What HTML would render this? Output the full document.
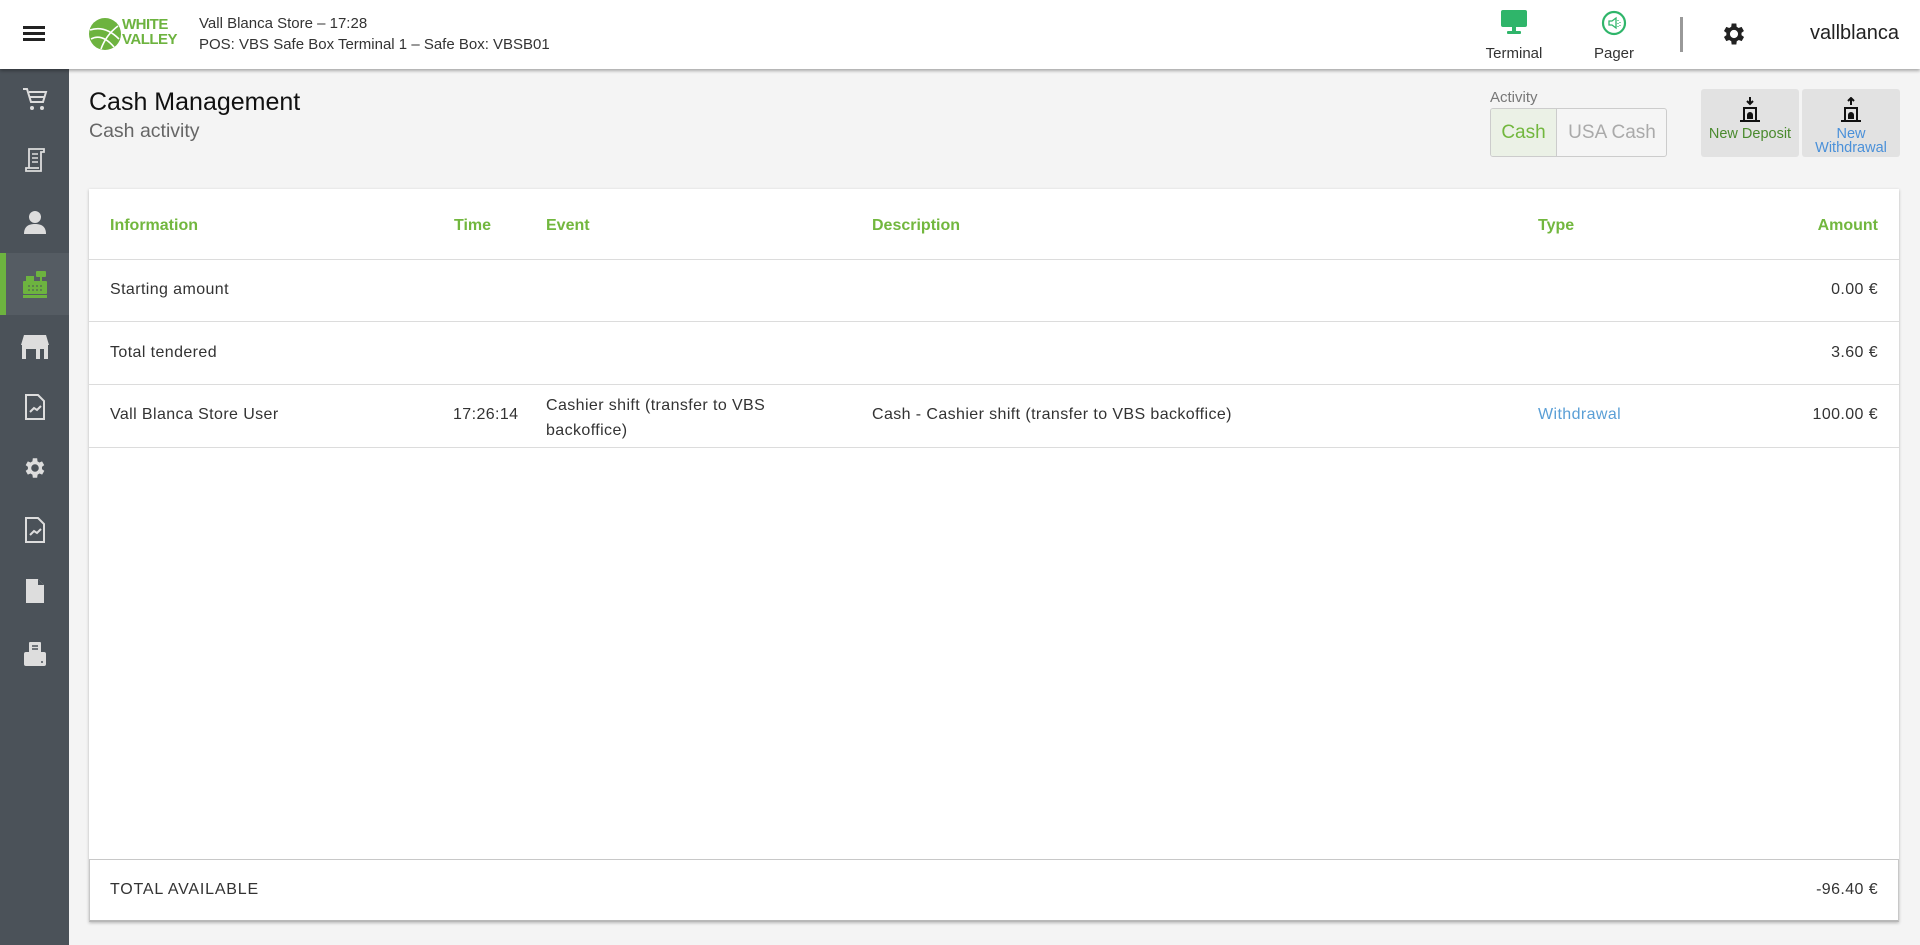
<!DOCTYPE html>
<html><head><meta charset="utf-8"><style>
*{box-sizing:border-box;margin:0;padding:0}
body{width:1920px;height:945px;overflow:hidden;background:#f4f4f4;font-family:"Liberation Sans",Arial,sans-serif;color:#333;position:relative}
.top{position:absolute;left:0;top:0;width:1920px;height:69px;background:#fff;box-shadow:0 2px 3px rgba(0,0,0,.3);z-index:5}
.side{position:absolute;left:0;top:69px;width:69px;height:876px;background:#4b5259}
.ico{position:absolute;left:0;width:69px;display:flex;justify-content:center;align-items:center;height:40px}
.abs{position:absolute}
.card{position:absolute;left:89px;top:189px;width:1810px;height:733px;background:#fff;box-shadow:0 1px 3px rgba(0,0,0,.25)}
.th{position:absolute;top:28px;font-weight:bold;color:#72b73e;font-size:16px}
.line{position:absolute;left:0;width:1810px;height:1px;background:#dcdcdc}
.td{position:absolute;font-size:16px;color:#333;letter-spacing:.4px}
.r{text-align:right}
</style></head><body>
<div class="top">
  <div class="abs" style="left:23px;top:26px;width:22px;height:3px;background:#222;box-shadow:0 6px 0 #222,0 12px 0 #222"></div>
  <svg class="abs" style="left:88px;top:17px" width="34" height="34" viewBox="0 0 34 34"><circle cx="17" cy="17" r="16" fill="#6db33f"/><path d="M2 13 Q17 8 31 22 M3 22 Q14 16 26 30 M13 32 Q18 18 30 9" stroke="#fff" stroke-width="1.6" fill="none"/></svg>
  <div class="abs" style="left:122px;top:17px;color:#6db33f;font-weight:bold;font-size:15px;line-height:15px;letter-spacing:-.5px">WHITE<br>VALLEY</div>
  <div class="abs" style="left:199px;top:13px;font-size:15px;line-height:21px;color:#333">Vall Blanca Store – 17:28<br>POS: VBS Safe Box Terminal 1 – Safe Box: VBSB01</div>
  <svg class="abs" style="left:1500px;top:9px" width="28" height="26" viewBox="0 0 28 26"><rect x="1" y="1" width="26" height="17" rx="2" fill="#2fb56a"/><rect x="12" y="18" width="4" height="4" fill="#2fb56a"/><rect x="7" y="22" width="14" height="3" rx="1" fill="#2fb56a"/></svg>
  <div class="abs" style="left:1484px;top:45px;width:60px;text-align:center;font-size:15px">Terminal</div>
  <svg class="abs" style="left:1601px;top:10px" width="26" height="26" viewBox="0 0 26 26"><circle cx="13" cy="13" r="11" fill="none" stroke="#2fb56a" stroke-width="2.2"/><path d="M8 11h3l4-3v10l-4-3H8z" fill="none" stroke="#2fb56a" stroke-width="1.3"/><path d="M17 10v1M17 13v1M17 16v1M19 12v1M19 15v1" stroke="#2fb56a" stroke-width="1.2"/></svg>
  <div class="abs" style="left:1584px;top:45px;width:60px;text-align:center;font-size:15px">Pager</div>
  <div class="abs" style="left:1680px;top:17px;width:3px;height:35px;background:#999"></div>
  <svg class="abs" style="left:1720px;top:20px" width="28" height="28" viewBox="0 0 24 24"><path fill="#222" d="M19.4 13a7.5 7.5 0 000-2l2.1-1.6-2-3.5-2.5 1a7.3 7.3 0 00-1.7-1L15 3h-4l-.4 2.9a7.3 7.3 0 00-1.7 1l-2.5-1-2 3.5L6.5 11a7.5 7.5 0 000 2l-2.1 1.6 2 3.5 2.5-1a7.3 7.3 0 001.7 1L11 21h4l.4-2.9a7.3 7.3 0 001.7-1l2.5 1 2-3.5zM13 15.5a3.5 3.5 0 110-7 3.5 3.5 0 010 7z" transform="translate(-1 0)"/></svg>
  <div class="abs" style="left:1810px;top:22px;font-size:20px;color:#222">vallblanca</div>
</div>
<div class="side">
  <div class="ico" style="top:10px"><svg width="26" height="26" viewBox="0 0 26 26"><path d="M1 3h4l4 13h12l3-10H7" fill="none" stroke="#ddd" stroke-width="2"/><path d="M8 11h14" stroke="#ddd" stroke-width="2"/><circle cx="10" cy="22" r="2" fill="#ddd"/><circle cx="20" cy="22" r="2" fill="#ddd"/></svg></div>
  <div class="ico" style="top:71px"><svg width="26" height="28" viewBox="0 0 26 28"><path d="M7 22V3h15v3h-3v19H4v-3h13" fill="none" stroke="#ddd" stroke-width="1.8"/><path d="M10 8h6M10 12h6M10 16h6" stroke="#ddd" stroke-width="1.6"/></svg></div>
  <div class="ico" style="top:133px"><svg width="24" height="26" viewBox="0 0 24 26"><circle cx="12" cy="8" r="6" fill="#ddd"/><path d="M1 25c0-8 5-10 11-10s11 2 11 10z" fill="#ddd"/></svg></div>
  <div class="abs" style="left:0;top:184px;width:69px;height:62px;background:#555c63"></div>
  <div class="abs" style="left:0;top:184px;width:6px;height:62px;background:#6db33f"></div>
  <div class="ico" style="top:195px"><svg width="30" height="30" viewBox="0 0 30 30"><rect x="3" y="12" width="24" height="13" rx="1" fill="#6db33f"/><rect x="6" y="7" width="8" height="7" fill="#6db33f"/><rect x="16" y="2" width="10" height="6" rx="1" fill="#6db33f"/><rect x="20" y="8" width="2" height="5" fill="#6db33f"/><rect x="3" y="26" width="24" height="3" fill="#6db33f"/><path d="M8 17h2M12 17h2M16 17h2M20 17h2M8 21h2M12 21h2M16 21h2M20 21h2" stroke="#4b5259" stroke-width="1"/></svg></div>
  <div class="ico" style="top:258px"><svg width="30" height="28" viewBox="0 0 30 28"><path d="M4 2h22l3 10H1z" fill="#ddd"/><rect x="2" y="12" width="26" height="14" fill="#ddd"/><rect x="6" y="16" width="10" height="10" fill="#4b5259"/><rect x="20" y="16" width="4" height="10" fill="#4b5259"/></svg></div>
  <div class="ico" style="top:318px"><svg width="22" height="28" viewBox="0 0 22 28"><path d="M2 2h12l6 6v18H2z" fill="none" stroke="#ddd" stroke-width="2"/><path d="M6 19l4-4 3 2 4-4" fill="none" stroke="#ddd" stroke-width="2"/></svg></div>
  <div class="ico" style="top:379px"><svg width="26" height="26" viewBox="0 0 24 24"><path fill="#ddd" d="M19.4 13a7.5 7.5 0 000-2l2.1-1.6-2-3.5-2.5 1a7.3 7.3 0 00-1.7-1L15 3h-4l-.4 2.9a7.3 7.3 0 00-1.7 1l-2.5-1-2 3.5L6.5 11a7.5 7.5 0 000 2l-2.1 1.6 2 3.5 2.5-1a7.3 7.3 0 001.7 1L11 21h4l.4-2.9a7.3 7.3 0 001.7-1l2.5 1 2-3.5zM13 15.5a3.5 3.5 0 110-7 3.5 3.5 0 010 7z" transform="translate(-1 0)"/></svg></div>
  <div class="ico" style="top:441px"><svg width="22" height="28" viewBox="0 0 22 28"><path d="M2 2h12l6 6v18H2z" fill="none" stroke="#ddd" stroke-width="2"/><path d="M6 19l4-4 3 2 4-4" fill="none" stroke="#ddd" stroke-width="2"/></svg></div>
  <div class="ico" style="top:502px"><svg width="22" height="28" viewBox="0 0 22 28"><path d="M2 2h12l6 6v18H2z" fill="#ddd"/><path d="M14 2v6h6" fill="#4b5259"/></svg></div>
  <div class="ico" style="top:565px"><svg width="26" height="28" viewBox="0 0 26 28"><rect x="7" y="2" width="12" height="12" rx="1" fill="#ddd"/><rect x="2" y="12" width="22" height="14" rx="2" fill="#ddd"/><path d="M10 6h6M10 9h6" stroke="#4b5259" stroke-width="1.5"/><circle cx="20" cy="22" r="1" fill="#4b5259"/></svg></div>
</div>
<div class="abs" style="left:89px;top:88px;font-size:25px;color:#111">Cash Management</div>
<div class="abs" style="left:89px;top:120px;font-size:19.5px;color:#666">Cash activity</div>
<div class="abs" style="left:1490px;top:89px;font-size:15px;color:#777">Activity</div>
<div class="abs" style="left:1490px;top:108px;width:177px;height:49px;border:1px solid #ccc;border-radius:3px;background:#f5f5f5;overflow:hidden">
  <div class="abs" style="left:0;top:0;width:66px;height:47px;background:#ebf1e6;border-right:1px solid #ccc;color:#72b73e;font-size:19px;text-align:center;line-height:47px">Cash</div>
  <div class="abs" style="left:67px;top:0;width:108px;height:47px;color:#aaa;font-size:19px;text-align:center;line-height:47px">USA Cash</div>
</div>
<div class="abs" style="left:1701px;top:89px;width:98px;height:68px;background:#e2e2e2;border-radius:3px">
  <svg class="abs" style="left:38px;top:8px" width="22" height="26" viewBox="0 0 22 26"><path d="M11 0v6M8 4l3 3 3-3" stroke="#111" stroke-width="2" fill="none"/><path d="M5 24V11h12v13" fill="none" stroke="#111" stroke-width="2"/><path d="M1 24h20" stroke="#111" stroke-width="2"/><path d="M8 22v-4a3 3 0 016 0v4" fill="#111"/></svg>
  <div class="abs" style="left:0;top:37px;width:98px;text-align:center;font-size:14.5px;color:#4a8a2e">New Deposit</div>
</div>
<div class="abs" style="left:1802px;top:89px;width:98px;height:68px;background:#e2e2e2;border-radius:3px">
  <svg class="abs" style="left:38px;top:8px" width="22" height="26" viewBox="0 0 22 26"><path d="M11 8V1M8 4l3-3 3 3" stroke="#111" stroke-width="2" fill="none"/><path d="M5 24V11h12v13" fill="none" stroke="#111" stroke-width="2"/><path d="M1 24h20" stroke="#111" stroke-width="2"/><path d="M8 22v-4a3 3 0 016 0v4" fill="#111"/></svg>
  <div class="abs" style="left:0;top:38px;width:98px;text-align:center;font-size:14.5px;line-height:14px;color:#4a90d9">New<br>Withdrawal</div>
</div>
<div class="card">
  <div class="th" style="left:21px">Information</div>
  <div class="th" style="left:365px">Time</div>
  <div class="th" style="left:457px">Event</div>
  <div class="th" style="left:783px">Description</div>
  <div class="th" style="left:1449px">Type</div>
  <div class="th r" style="right:21px">Amount</div>
  <div class="line" style="top:70px"></div>
  <div class="td" style="left:21px;top:92px">Starting amount</div>
  <div class="td" style="right:21px;top:92px">0.00 €</div>
  <div class="line" style="top:132px"></div>
  <div class="td" style="left:21px;top:155px">Total tendered</div>
  <div class="td" style="right:21px;top:155px">3.60 €</div>
  <div class="line" style="top:195px"></div>
  <div class="td" style="left:21px;top:217px">Vall Blanca Store User</div>
  <div class="td" style="left:364px;top:217px">17:26:14</div>
  <div class="td" style="left:457px;top:204px;line-height:25px">Cashier shift (transfer to VBS<br>backoffice)</div>
  <div class="td" style="left:783px;top:217px">Cash - Cashier shift (transfer to VBS backoffice)</div>
  <div class="td" style="left:1449px;top:217px;color:#5a9fd6">Withdrawal</div>
  <div class="td" style="right:21px;top:217px">100.00 €</div>
  <div class="line" style="top:258px"></div>
</div>
<div class="abs" style="left:89px;top:859px;width:1810px;height:63px;background:#fff;border:1px solid #c8c8c8;border-bottom:2px solid #b8b8b8">
  <div class="td" style="left:20px;top:21px;letter-spacing:.8px">TOTAL AVAILABLE</div>
  <div class="td" style="right:20px;top:21px">-96.40 €</div>
</div>
</body></html>
